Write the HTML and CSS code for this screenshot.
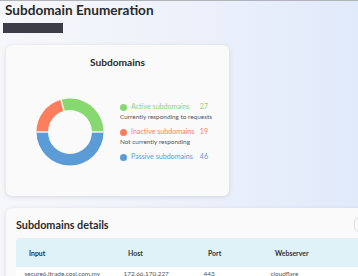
FILE: index.html
```html
<!doctype html>
<html lang="en">
<head>
  <meta charset="utf-8">
  <title>Subdomain Enumeration</title>
  <link rel="stylesheet" href="styles.css">
</head>
<body>
  <div id="page">
    <h1 class="page-title">Subdomain Enumeration</h1>
    <div class="redacted"></div>

    <!-- summary chart -->
    <div class="card chart-card">
      <h2 class="card-title">Subdomains</h2>
      <div class="chart-row">
        <svg class="donut" width="70" height="70" viewBox="0 0 70 70">
          <path fill="#86d96e" d="M25.96 2.74 A33.5 33.5 0 0 1 68.5 35 L57 35 A22 22 0 0 0 29.06 13.82 Z"/>
          <path fill="#5b9bd6" d="M68.5 35 A33.5 33.5 0 0 1 1.5 35 L13 35 A22 22 0 0 0 57 35 Z"/>
          <path fill="#fc7e5c" d="M1.5 35 A33.5 33.5 0 0 1 25.96 2.74 L29.06 13.82 A22 22 0 0 0 13 35 Z"/>
          <g fill="none" stroke="#fafafa" stroke-width="1.4">
            <line x1="25.96" y1="2.74" x2="29.06" y2="13.82"/>
            <line x1="57" y1="35" x2="68.5" y2="35"/>
            <line x1="1.5" y1="35" x2="13" y2="35"/>
          </g>
        </svg>
        <ul class="legend">
          <li class="item active">
            <div class="label"><span class="dot"></span><span class="name">Active subdomains</span><span class="count">27</span></div>
            <div class="desc">Currently responding to requests</div>
          </li>
          <li class="item inactive">
            <div class="label"><span class="dot"></span><span class="name">Inactive subdomains</span><span class="count">19</span></div>
            <div class="desc">Not currently responding</div>
          </li>
          <li class="item passive">
            <div class="label"><span class="dot"></span><span class="name">Passive subdomains</span><span class="count">46</span></div>
          </li>
        </ul>
      </div>
    </div>

    <!-- details table -->
    <div class="card details-card">
      <div class="details-head">
        <h2 class="details-title">Subdomains details</h2>
        <input class="search" type="text">
      </div>
      <table class="details">
        <colgroup>
          <col style="width:99px">
          <col style="width:80px">
          <col style="width:67px">
          <col>
        </colgroup>
        <thead>
          <tr><th>Input</th><th>Host</th><th>Port</th><th>Webserver</th></tr>
        </thead>
        <tbody>
          <tr><td>secure6.itrade.cosi.com.my</td><td>172.66.170.227</td><td>443</td><td>cloudflare</td></tr>
        </tbody>
      </table>
    </div>
  </div>
</body>
</html>
```

FILE: styles.css
```css
html,
body {
  margin: 0;
  padding: 0;
  width: 358px;
  height: 276px;
  overflow: hidden;
}

body {
  background: linear-gradient(90deg, #f6f7fa 0%, #eef2fa 45%, #e1eafb 100%);
  border-top: 1px solid #b1b4b9;
  box-sizing: border-box;
  font-family: Lato, "Noto Sans", sans-serif;
  color: #222;
}

#page {
  padding: 0 0 0 3px;
}

.page-title {
  margin: 0 0 0 2px;
  font-size: 13.6px;
  line-height: 19px;
  font-weight: 700;
  color: #2a2a2a;
}

.redacted {
  width: 60px;
  height: 10px;
  margin-top: 3px;
  background: #3d3d47;
  filter: blur(0.5px);
}

.card {
  background: #fafafa;
  border-radius: 6px;
  box-shadow: 0 1px 4px rgba(60, 70, 100, .16);
}

.chart-card {
  width: 223px;
  height: 151px;
  margin: 12px 0 0 3px;
  box-sizing: border-box;
  padding-top: 9px;
}

.card-title {
  margin: 0;
  text-align: center;
  font-size: 10.2px;
  line-height: 16px;
  font-weight: 700;
  color: #2a2a2a;
}

.chart-row {
  display: flex;
  align-items: center;
  margin-top: 27px;
  padding-left: 29px;
}

.donut {
  display: block;
  flex: none;
}

.legend {
  list-style: none;
  margin: 0 0 0 15px;
  padding: 0;
  width: 89px;
}

.item {
  margin-bottom: 6px;
}

.item:last-child {
  margin-bottom: 0;
}

.label {
  display: flex;
  align-items: center;
  font-size: 7.1px;
  line-height: 10px;
  white-space: nowrap;
}

.dot {
  width: 7px;
  height: 7px;
  border-radius: 50%;
  margin: 0 4px 0 0;
  flex: none;
}

.name {
  flex: 1;
}

.count {
  margin-right: 1px;
}

.desc {
  font-size: 6.4px;
  line-height: 9px;
  color: #555;
  white-space: nowrap;
}

.active { color: #86d96e; }
.active .dot { background: #86d96e; }
.inactive { color: #fc7e5c; }
.inactive .dot { background: #fc7e5c; }
.passive { color: #5b9bd6; }
.passive .dot { background: #5b9bd6; }

.details-card {
  width: 508px;
  margin: 12px 0 0 3px;
  padding: 8px 10px 10px;
  box-sizing: border-box;
}

.details-head {
  display: flex;
  align-items: center;
  height: 17px;
}

.details-title {
  margin: 0;
  font-size: 10.8px;
  font-weight: 700;
  color: #2a2a2a;
}

.search {
  margin-left: auto;
  width: 150px;
  height: 15px;
  box-sizing: border-box;
  border: 1px solid #dedede;
  border-radius: 5px;
  background: #fafafa;
}

.details {
  margin-top: 5px;
  width: 100%;
  border-collapse: separate;
  border-spacing: 0;
  table-layout: fixed;
  font-size: 6.4px;
}

.details th {
  background: #def2f8;
  text-align: left;
  font-size: 6.9px;
  font-weight: 700;
  color: #333;
  height: 29px;
  padding: 0 0 0 13px;
}

.details th:first-child {
  border-top-left-radius: 4px;
}

.details td {
  background: #fff;
  color: #555;
  padding: 3px 0 3px 8.5px;
}
```
